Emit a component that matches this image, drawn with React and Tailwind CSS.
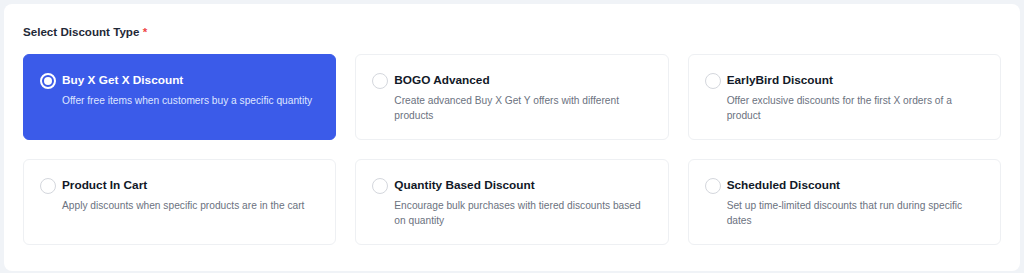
const types = [
  {
    title: "Buy X Get X Discount",
    desc: "Offer free items when customers buy a specific quantity",
  },
  {
    title: "BOGO Advanced",
    desc: "Create advanced Buy X Get Y offers with different products",
  },
  {
    title: "EarlyBird Discount",
    desc: "Offer exclusive discounts for the first X orders of a product",
  },
  {
    title: "Product In Cart",
    desc: "Apply discounts when specific products are in the cart",
  },
  {
    title: "Quantity Based Discount",
    desc: "Encourage bulk purchases with tiered discounts based on quantity",
  },
  {
    title: "Scheduled Discount",
    desc: "Set up time-limited discounts that run during specific dates",
  },
];

const TypeCard = ({ item, active }) => {
  return (
    <div
      className={
        active
          ? "flex items-start gap-1.5 rounded-md border border-[#3b5be9] bg-[#3b5be9] px-4 pt-[17px] pb-4"
          : "flex items-start gap-1.5 rounded-md border border-[#eef0f3] bg-white px-4 pt-[17px] pb-4"
      }
    >
      {active ? (
        <span className="mt-[1px] flex h-4 w-4 shrink-0 items-center justify-center rounded-full border-2 border-white">
          <span className="h-[8px] w-[8px] rounded-full bg-white" />
        </span>
      ) : (
        <span className="mt-[1px] h-4 w-4 shrink-0 rounded-full border-[1.5px] border-[#d4d7dd] bg-white" />
      )}
      <div className="min-w-0">
        <div
          className={
            active
              ? "text-[11.8px] leading-4 font-bold text-white"
              : "text-[11.8px] leading-4 font-bold text-[#111827]"
          }
        >
          {item.title}
        </div>
        <p
          className={
            active
              ? "mt-[5px] text-[10.2px] leading-[15px] text-[#dfe6ff]"
              : "mt-[5px] text-[10.2px] leading-[15px] text-[#6b7280]"
          }
        >
          {item.desc}
        </p>
      </div>
    </div>
  );
};

export default function App() {
  return (
    <div
      className="min-h-[273px] bg-[#f0f3f7] p-1"
      style={{ fontFamily: '"Liberation Sans", Arial, sans-serif' }}
    >
      <div className="rounded-lg bg-white px-[19px] pt-5 pb-[26px]">
        <h2 className="mb-[14px] text-[11.6px] leading-4 font-bold text-[#1f2937]">
          Select Discount Type <span className="text-[#ef4444]">*</span>
        </h2>
        <div className="grid grid-cols-3 gap-x-[19px] gap-y-[19px]">
          {types.map((item, i) => (
            <TypeCard key={item.title} item={item} active={i === 0} />
          ))}
        </div>
      </div>
    </div>
  );
}
